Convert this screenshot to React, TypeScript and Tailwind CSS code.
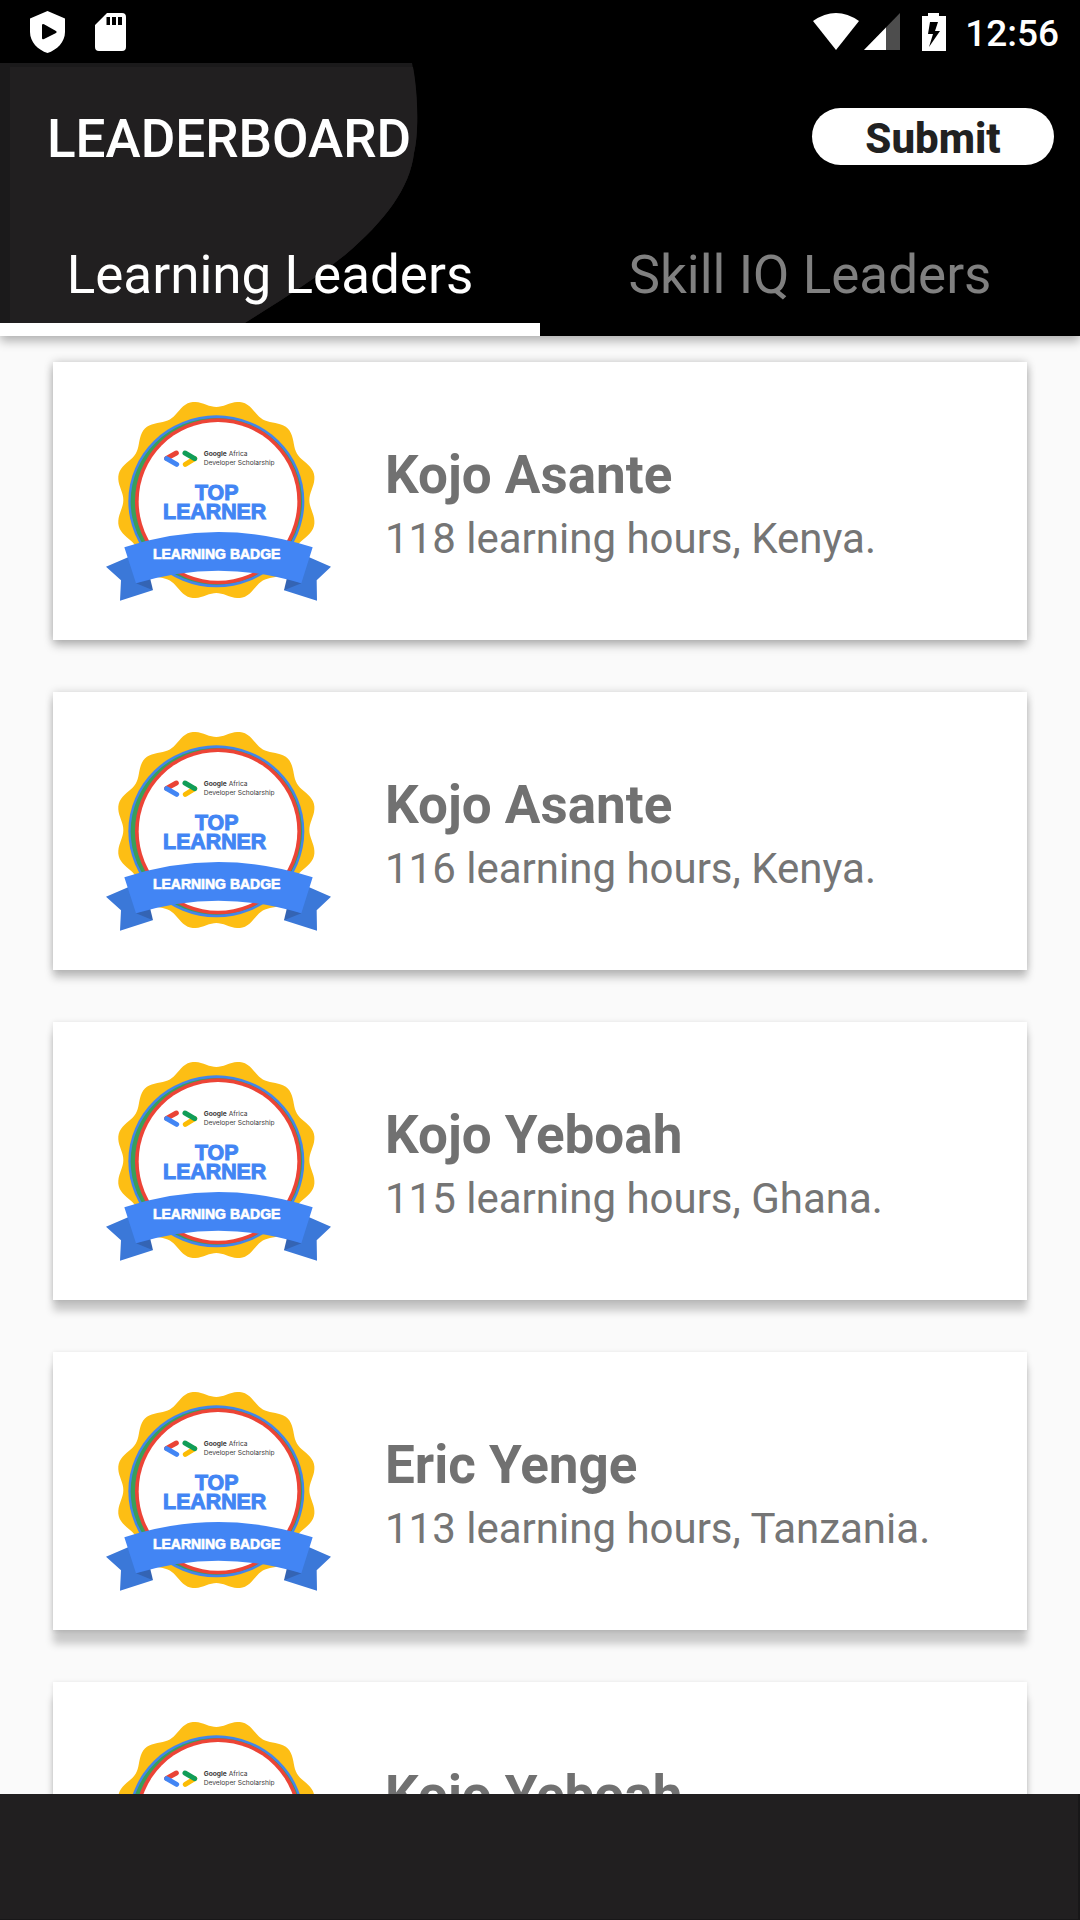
import { useState } from "react";

type Leader = { name: string; detail: string; shadow: string };

const learningLeaders: Leader[] = [
  { name: "Kojo Asante", detail: "118 learning hours, Kenya.", shadow: "shadow-[0_6px_9px_rgba(0,0,0,0.22),0_0_9px_rgba(0,0,0,0.2)]" },
  { name: "Kojo Asante", detail: "116 learning hours, Kenya.", shadow: "shadow-[0_8px_8px_rgba(0,0,0,0.21),0_0_8px_rgba(0,0,0,0.17)]" },
  { name: "Kojo Yeboah", detail: "115 learning hours, Ghana.", shadow: "shadow-[0_11px_8px_rgba(0,0,0,0.2),0_1px_6px_rgba(0,0,0,0.14)]" },
  { name: "Eric Yenge", detail: "113 learning hours, Tanzania.", shadow: "shadow-[0_14px_8px_rgba(0,0,0,0.2),0_1px_5px_rgba(0,0,0,0.13)]" },
  { name: "Kojo Yeboah", detail: "112 learning hours, Ghana.", shadow: "shadow-[0_16px_8px_rgba(0,0,0,0.2),0_1px_5px_rgba(0,0,0,0.13)]" },
];

// Twelve-lobed outline of the rosette.
const rosette =
  Array.from({ length: 240 }, (_, i) => {
    const a = (i / 240) * Math.PI * 2;
    const r = 291 - 12 * Math.cos(12 * a);
    return `${i === 0 ? "M" : "L"}${(381 + r * Math.sin(a)).toFixed(1)} ${(361 - r * Math.cos(a)).toFixed(1)}`;
  }).join("") + "Z";

function LearnerBadge() {
  return (
    <svg viewBox="50 64 675 600" className="h-[200px] w-[225px] shrink-0" role="img" aria-label="Top learner badge">
      <path d={rosette} fill="#fdbe14" />
      <ellipse cx="381" cy="365" rx="264" ry="258" fill="#4385ea" />
      <ellipse cx="381" cy="365" rx="257" ry="250" fill="#3a9f5a" />
      <circle cx="386" cy="365" r="249" fill="#ec4436" />
      <circle cx="386" cy="365" r="238" fill="#fff" />
      <g strokeWidth="15" strokeLinecap="round" fill="none">
        <path d="M232 236 261 220" stroke="#ea4335" />
        <path d="M232 237 262 254" stroke="#4285f4" />
        <path d="M316 237 288 254" stroke="#fbbc04" />
        <path d="M287 220 316 237" stroke="#109d58" />
      </g>
      <g fontFamily="Inter, sans-serif" fill="#3c3c3c">
        <text x="343" y="229" fontSize="20">
          <tspan fontWeight="700">Google</tspan> Africa
        </text>
        <text x="343" y="255" fontSize="20">Developer Scholarship</text>
      </g>
      <text
        fontFamily="Liberation Sans, Arial, sans-serif"
        fontWeight="700"
        fontSize="64"
        textAnchor="middle"
        fill="#4285f4"
        stroke="#4285f4"
        strokeWidth="3"
      >
        <tspan x="382" y="361">TOP</tspan>
        <tspan x="376" y="419">LEARNER</tspan>
      </text>
      <path d="M50 561 118 532 190 632 92 663 95 602Z" fill="#3b78d8" />
      <path d="M725 561 658 532 584 632 683 663 682 602Z" fill="#3b78d8" />
      <path d="M140 611 182 594 191 632Z" fill="#3464b4" />
      <path d="M636 611 593 594 584 632Z" fill="#3464b4" />
      <path d="M105 503Q245 457 387 457T670 503L636 611Q510 573 387 573T140 611Z" fill="#4285f4" />
      <text
        x="382"
        y="537"
        fontSize="42"
        fontFamily="Liberation Sans, Arial, sans-serif"
        fontWeight="700"
        textAnchor="middle"
        fill="#fff"
        stroke="#fff"
        strokeWidth="2"
      >
        LEARNING BADGE
      </text>
    </svg>
  );
}

function StatusBar() {
  return (
    <div className="flex h-[63px] shrink-0 items-center bg-black pr-[21px] pl-[30px] text-white">
      <svg viewBox="0 0 35 42" className="h-[42px] w-[35px]" aria-hidden="true">
        <path fillRule="evenodd" fill="#fff" d="M17.5 0 35 7.500V21C35 31 27 39 17.500 42 8 39 0 31 0 21V7.500ZM12 14.500V27Q12 29 14 28L26 22Q27.500 21 26 20L14 13.300Q12 12.500 12 14.500Z" />
      </svg>
      <svg viewBox="0 0 31 38" className="ml-[30px] h-[38px] w-[31px]" aria-hidden="true">
        <path fillRule="evenodd" fill="#fff" d="M12 0H27Q31 0 31 4V34Q31 38 27 38H4Q0 38 0 34V12ZM11.500 4V12H15V4ZM17 4V12H21V4ZM23 4V12H27V4Z" />
      </svg>
      <div className="ml-auto flex items-center">
        <svg viewBox="0 0 46 37" className="h-[37px] w-[46px]" aria-hidden="true">
          <path fill="#fff" d="M0 8Q23-8 46 8L23 37Z" />
        </svg>
        <svg viewBox="0 0 36 37" className="ml-[5px] h-[37px] w-[36px]" aria-hidden="true">
          <path fill="#4d4d4d" d="M36 0V37H0Z" />
          <path fill="#fff" d="M22 14.500V37H0Z" />
        </svg>
        <svg viewBox="0 0 24 38" className="ml-[22px] h-[38px] w-[24px]" aria-hidden="true">
          <path fillRule="evenodd" fill="#fff" d="M6 0H17V3H24V38H0V3H6ZM8 9 6 21H11L7 34 18 18H13L16 9Z" />
        </svg>
        <span className="ml-[19px] pt-[3px] text-[37px] leading-none font-medium">12:56</span>
      </div>
    </div>
  );
}

export default function App() {
  const [tab, setTab] = useState(0);
  const tabs = ["Learning Leaders", "Skill IQ Leaders"];

  return (
    <div className="flex h-screen flex-col overflow-hidden bg-[#fafafa] font-[Roboto,sans-serif]">
      <StatusBar />
      <header className="relative z-10 shrink-0 bg-black shadow-[0_5px_10px_rgba(0,0,0,0.3)]">
        <svg viewBox="0 0 420 273" className="absolute top-0 left-0 h-[273px] w-[420px]" aria-hidden="true">
          <path fill="#1b1a1b" d="M0 0H412C418 30 419 70 414 90C410 125 385 158 345 192C310 220 275 241 224 273H0Z" />
          <path fill="#211f20" d="M10 4H413C418 30 419 70 414 90C410 125 385 158 345 192C310 220 275 241 224 273H10Z" />
        </svg>
        <div className="relative flex h-[147px] items-center justify-between pr-[26px] pl-[47px]">
          <h1 className="pt-[6px] text-[53px] leading-none font-medium text-white">LEADERBOARD</h1>
          <button type="button" className="h-[57px] w-[242px] rounded-full bg-white pt-1 text-[42px] leading-none font-extrabold text-[#212121]">
            Submit
          </button>
        </div>
        <div role="tablist" className="relative grid h-[126px] grid-cols-2">
          {tabs.map((label, i) => (
            <button
              key={label}
              type="button"
              role="tab"
              aria-selected={tab === i}
              onClick={() => setTab(i)}
              className={
                tab === i
                  ? "border-b-[13px] border-white pt-[17px] text-[53px] leading-none text-white"
                  : "border-b-[13px] border-transparent pt-[17px] text-[53px] leading-none text-[#808080]"
              }
            >
              {label}
            </button>
          ))}
        </div>
      </header>
      <main className="min-h-0 flex-1 overflow-hidden px-[53px] pt-[26px]">
        <ul className="flex flex-col gap-[52px]">
          {learningLeaders.map((leader, i) => (
            <li key={i} className={`flex h-[278px] items-center bg-white pl-[53px] ${leader.shadow}`}>
              <LearnerBadge />
              <div className="ml-[54px] pt-1 text-[#757575]">
                <h2 className="text-[53px] leading-[62px] font-bold text-[#717171]">{leader.name}</h2>
                <p className="mt-2 text-[42px] leading-[49px]">{leader.detail}</p>
              </div>
            </li>
          ))}
        </ul>
      </main>
      <footer className="relative z-10 h-[126px] shrink-0 border-r-2 border-b border-[#181718] bg-[#211f20]" />
    </div>
  );
}
